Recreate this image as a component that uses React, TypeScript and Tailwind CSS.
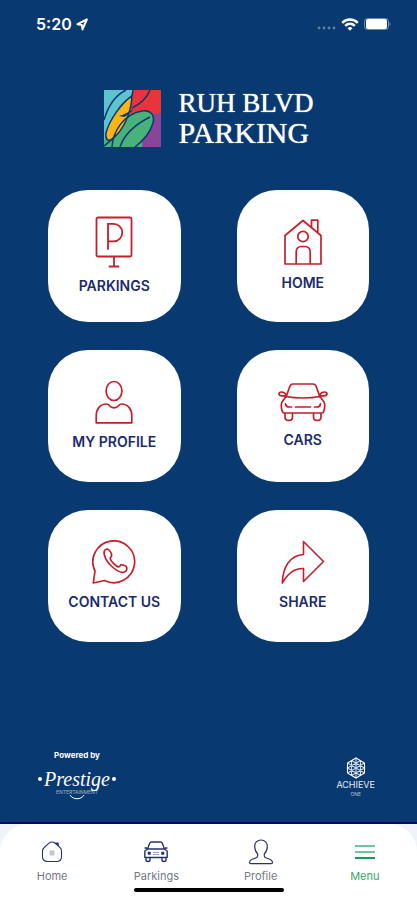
import type { ReactNode } from 'react'

interface MenuItem {
  label: string
  icon: ReactNode
}

interface TabItem {
  label: string
  icon: ReactNode
  active?: boolean
}

const ParkingIcon = () => (
  <svg width="38" height="52" viewBox="0 0 38 52" fill="none" stroke="currentColor" strokeWidth="1.8" strokeLinecap="round">
    <rect x="1.5" y="1.5" width="35" height="39" rx="1.5" />
    <path d="M13 33V7.800h5.500a8.800 8.800 0 0 1 0 17.600H13" />
    <path d="M19 41v9M14.500 50.500h9" />
  </svg>
)

const HouseIcon = () => (
  <svg width="38" height="46" viewBox="0 0 38 46" fill="none" stroke="currentColor" strokeWidth="1.7" strokeLinejoin="round">
    <path d="M1 45V16.500L19 1.500l18 15V45z" />
    <path d="M27.500 8V1.200h6.300V13" />
    <circle cx="19" cy="17.5" r="5.2" />
    <path d="M12.200 45V32.500a5 5 0 0 1 5-5h4a5 5 0 0 1 5 5V45" />
  </svg>
)

const PersonIcon = () => (
  <svg width="38" height="44" viewBox="0 0 38 44" fill="none" stroke="currentColor" strokeWidth="1.7" strokeLinejoin="round">
    <ellipse cx="19" cy="11" rx="7.9" ry="9.5" />
    <path d="M1.200 42.800V36c0-7 4-12 10.300-12 1.700 0 2.300.8 3 1.800 1 1.300 2.500 2 4.500 2s3.500-.7 4.500-2c.7-1 1.300-1.800 3-1.800 6.300 0 10.300 5 10.300 12v6.800z" />
  </svg>
)

const CarIcon = () => (
  <svg width="50" height="40" viewBox="0 0 50 40" fill="none" stroke="currentColor" strokeWidth="1.7" strokeLinecap="round" strokeLinejoin="round">
    <path d="M8 15l3.800-10.500C12.500 2.600 13.500 2 15 2h20c1.500 0 2.500.6 3.200 2.500L42 15" />
    <path d="M8 14.500c5 1 11 1.500 17 1.500s12-.5 17-1.500" />
    <path d="M8 14.500l-4 5.500c-.9 2-.7 6.500.3 9.600.3 1 .8 1.400 1.700 1.400h38c.9 0 1.400-.4 1.700-1.400 1-3.100 1.200-7.600.3-9.600l-4-5.500" />
    <path d="M7.500 13.800H4c-2 0-3-.9-3-2s1-1.800 2.500-1.800C6 10 7.500 11.500 8.500 13M42.500 13.800H46c2 0 3-.9 3-2s-1-1.800-2.500-1.800c-2.500 0-4 1.500-5 3" />
    <path d="M7 31.500v3.200c0 5 7.500 5 7.500 0v-3.200M35.500 31.500v3.200c0 5 7.500 5 7.500 0v-3.200" />
    <path d="M7.500 21.800c.3 2 1.500 3.200 3.500 3.200h2.500M42.500 21.800c-.3 2-1.500 3.200-3.500 3.200h-2.500M17.500 25h15" />
  </svg>
)

const WhatsappIcon = () => (
  <svg width="44" height="44" viewBox="0 0 44 44" fill="none" stroke="currentColor" strokeWidth="1.7" strokeLinejoin="round">
    <path d="M1.300 43L3 31A20.900 20.900 0 1 1 12.500 40.500z" />
    <path d="M17 10c-1.500-1.500-4-.8-4.700 1-1.200 4 2.200 10.500 7 15 4.500 4.300 10 7.500 13.600 5.700 2.300-1.200 2.300-4 1.300-5.200-.8-.9-3.900-2-5.200-1.600-1.200.4-1.300 2.200-2.800 2-2.400-.8-7-5.300-8-8.100-.3-1.500 1.300-1.700 1.400-3 .1-1.900-1.300-4.600-2.600-5.800z" />
  </svg>
)

const ShareIcon = () => (
  <svg width="44" height="44" viewBox="0 0 44 44" fill="none" stroke="currentColor" strokeWidth="1.6" strokeLinejoin="round">
    <path d="M22.500 1.500l20 20-20 20V28.500C14 28 7 33 1.300 43 1.800 26.500 9 15.500 22.500 14.500z" />
  </svg>
)

const menuItems: MenuItem[] = [
  { label: 'PARKINGS', icon: <ParkingIcon /> },
  { label: 'HOME', icon: <HouseIcon /> },
  { label: 'MY PROFILE', icon: <PersonIcon /> },
  { label: 'CARS', icon: <CarIcon /> },
  { label: 'CONTACT US', icon: <WhatsappIcon /> },
  { label: 'SHARE', icon: <ShareIcon /> },
]

const tabs: TabItem[] = [
  {
    label: 'Home',
    icon: (
      <svg width="22" height="22" viewBox="0 0 22 22" fill="none" stroke="currentColor" strokeWidth="1.1" strokeLinejoin="round">
        <path d="M1.500 10c0-2 .8-2.800 2.200-4L8 2.200C9.800.8 12.200.8 14 2.200l4.500 3.800c1.400 1.200 2 2 2 3.800v5.700c0 3.300-1.700 5-5 5h-9c-3.300 0-5-1.700-5-5z" />
        <path d="M14 2.200h3V5" strokeWidth="1.6" />
        <path d="M9 10h4v4H9zM11 10v4M9 12h4" strokeWidth=".6" opacity=".5" />
      </svg>
    ),
  },
  {
    label: 'Parkings',
    icon: (
      <svg width="26" height="22" viewBox="0 0 26 22" fill="none" stroke="currentColor" strokeWidth="1.4" strokeLinejoin="round">
        <path d="M4.500 8L6.600 2.500C7 1.500 7.500 1 8.500 1h9c1 0 1.500.5 1.900 1.500L21.500 8z" />
        <path d="M4.500 8L1.800 10v6.500h22.400V10L21.500 8M4 7H1.500M22 7h2.500" />
        <path d="M3 17v2c0 2 4 2 4 0v-2M19 17v2c0 2 4 2 4 0v-2" />
        <path d="M5 11h2.500v2.500H5zM18.500 11H21v2.500h-2.500z" fill="currentColor" strokeWidth=".5" />
        <path d="M10 11.500h6M10 13.500h6" strokeWidth=".8" opacity=".6" />
      </svg>
    ),
  },
  {
    label: 'Profile',
    icon: (
      <svg width="26" height="26" viewBox="0 0 26 26" fill="none" stroke="currentColor" strokeWidth="1.2" strokeLinejoin="round">
        <path d="M13 1c-4 0-6.300 2.700-6.300 6.500 0 3.300 1.200 5.700 3 7.500v2c0 1-.7 1.500-2 2l-4 1.500c-1.500.6-2.200 1.500-2.200 3 0 .8.500 1.200 1.300 1.200h20.400c.8 0 1.300-.4 1.300-1.200 0-1.500-.7-2.400-2.200-3l-4-1.500c-1.300-.5-2-1-2-2v-2c1.800-1.800 3-4.200 3-7.500C19.300 3.700 17 1 13 1z" />
      </svg>
    ),
  },
  {
    label: 'Menu',
    active: true,
    icon: (
      <svg width="20" height="16" viewBox="0 0 20 16" fill="none" stroke="currentColor" strokeWidth="2">
        <path d="M0 2h20M0 8h20" opacity=".6" />
        <path d="M0 14h20" />
      </svg>
    ),
  },
]

function StatusBar() {
  return (
    <div className="flex h-12 items-center justify-between pr-[26px] pl-9 text-white">
      <div className="flex items-center gap-1">
        <span className="text-base leading-5 font-semibold">5:20</span>
        <svg width="12" height="13" viewBox="0 0 12 13" fill="none" stroke="currentColor" strokeWidth="2" strokeLinejoin="round">
          <path d="M10.800 1.500L1.500 6.200l4.300.7.700 4.500z" />
        </svg>
      </div>
      <div className="flex items-center gap-1">
        <svg width="20" height="12" viewBox="0 0 20 12" fill="currentColor" opacity=".35">
          <circle cx="2" cy="10" r="1.4" />
          <circle cx="7" cy="10" r="1.4" />
          <circle cx="12" cy="10" r="1.4" />
          <circle cx="17" cy="10" r="1.4" />
        </svg>
        <svg width="18" height="13" viewBox="0 0 18 13" fill="none" stroke="currentColor" strokeWidth="2.4">
          <path d="M1.200 4.800a11 11 0 0 1 15.600 0M4.200 7.800a6.800 6.800 0 0 1 9.600 0" />
          <path d="M6.500 10.200a3.600 3.600 0 0 1 5 0L9 12.700z" fill="currentColor" stroke="none" />
        </svg>
        <svg width="28" height="14" viewBox="0 0 28 14">
          <rect x="1.5" y="1.5" width="24" height="11" rx="3" fill="none" stroke="white" opacity=".4" />
          <rect x="3" y="2" width="21" height="10" rx="2" fill="white" />
          <path d="M26.500 5v4c1.300-.5 1.300-3.500 0-4z" fill="white" opacity=".5" />
        </svg>
      </div>
    </div>
  )
}

function Logo() {
  return (
    <div className="flex items-center justify-center gap-[18px]">
      <svg width="57" height="57" viewBox="0 0 57 57">
        <path d="M0 0h57v57H0z" fill="#5cc3cf" />
        <path d="M29 0h28v26H26z" fill="#e9343c" />
        <path d="M44 24l13-1v34H28z" fill="#87469a" />
        <path d="M0 57V50l20-22h20l-2 29z" fill="#49b27b" />
        <path d="M8 57c1-16 12-33 30-36 9-1 13 4 11 12-3 10-10 18-18 24z" fill="#49b27b" />
        <path d="M28 6C17 13 5 31 2 43c-1 6 2 9 6 6 11-8 19-25 20-43z" fill="#fdb515" />
        <g fill="none" stroke="#0b3770" strokeWidth="1.5">
          <path d="M28 6C17 13 5 31 2 43c-1 6 2 9 6 6 11-8 19-25 20-43z" />
          <path d="M8 57c1-16 12-33 30-36 9-1 13 4 11 12-3 10-10 18-18 24" />
          <path d="M16 57C20 45 30 35 46 27M0 56C5 52 9 49 12 45" />
          <path d="M0 30C4 16 10 6 22 0M28 6l1-6M28 18C36 14 43 8 46 0" />
        </g>
        <path d="M15 26c4-1 10-4 14-7-2 4-5 6-9 8z" fill="#0b3770" />
      </svg>
      <h1 className="font-['Liberation_Serif',serif] leading-[30px] text-white [text-shadow:0_0_1px_white]">
        <span className="block text-[27px]">RUH BLVD</span>
        <span className="block text-[30px]">PARKING</span>
      </h1>
    </div>
  )
}

function Credits() {
  return (
    <div className="flex items-start justify-between pr-[42px] pl-[38px] text-white">
      <div className="flex flex-col items-center">
        <span className="text-[8px] leading-3 font-bold">Powered by</span>
        <div className="mt-2 flex items-center">
          <span className="size-1 rounded-full bg-white" />
          <span className="px-0.5 font-['Liberation_Serif',serif] text-xl leading-5 italic">Prestige</span>
          <span className="size-1 rounded-full bg-white" />
        </div>
        <span className="text-[5px] leading-[6px] text-white/60">ENTERTAINMENT</span>
        <svg width="16" height="5" viewBox="0 0 16 5" fill="none" stroke="currentColor">
          <path d="M1 0c3 5 11 5 14 0" />
        </svg>
      </div>
      <div className="flex flex-col items-center pt-2">
        <svg width="20" height="22" viewBox="0 0 20 22" fill="none" stroke="currentColor" strokeWidth="1.1">
          <path d="M10 1l8.500 5v10L10 21l-8.500-5V6z" />
          <path d="M10 1v20M1.500 6l17 10M18.500 6l-17 10M5.500 3.500l13 7.500-13 7.500M14.500 3.500L1.500 11l13 7.500M5.500 3.500v15M14.500 3.500v15" opacity=".8" />
        </svg>
        <span className="text-[9px] leading-3 text-white/90">ACHIEVE</span>
        <span className="text-[5px] leading-[6px] text-white/70">ONE</span>
      </div>
    </div>
  )
}

function TabBar() {
  return (
    <nav className="border-t-2 border-[#00085f] bg-[#f0f4f8]">
      <div className="rounded-t-[28px] bg-white">
        <ul className="grid grid-cols-4 pt-3">
          {tabs.map(tab => (
            <li key={tab.label}>
              <button
                type="button"
                className={`flex w-full flex-col items-center ${tab.active ? 'text-[#169b58]' : 'text-[#27346f]'}`}
              >
                <span className="flex h-8 items-center">{tab.icon}</span>
                <span className={`text-[11px] leading-4 ${tab.active ? 'text-[#35a76c]' : 'text-[#747885]'}`}>
                  {tab.label}
                </span>
              </button>
            </li>
          ))}
        </ul>
        <div className="flex justify-center pt-1 pb-2">
          <div className="h-1 w-[150px] rounded-full bg-black" />
        </div>
      </div>
    </nav>
  )
}

export default function App() {
  return (
    <div className="flex min-h-screen flex-col bg-[#083971] font-['Inter',sans-serif]">
      <StatusBar />
      <main className="flex flex-1 flex-col pt-10">
        <Logo />
        <div className="mt-[42px] grid grid-cols-2 gap-x-14 gap-y-7 px-12">
          {menuItems.map(item => (
            <button
              key={item.label}
              type="button"
              className="flex h-[132px] flex-col items-center justify-center gap-2 rounded-[40px] bg-white text-[#c51f2b]"
            >
              {item.icon}
              <span className="text-sm leading-5 font-semibold text-[#1c2b6b]">{item.label}</span>
            </button>
          ))}
        </div>
        <div className="mt-auto pb-[22px]">
          <Credits />
        </div>
      </main>
      <TabBar />
    </div>
  )
}
